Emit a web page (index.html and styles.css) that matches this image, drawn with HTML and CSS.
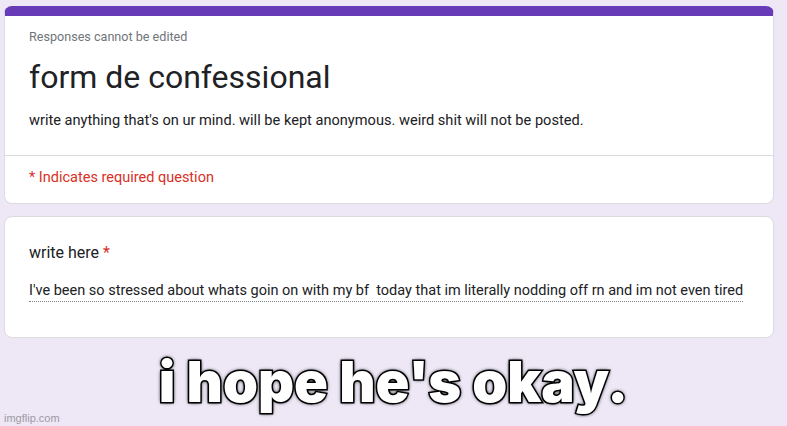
FILE: index.html
```html
<!DOCTYPE html>
<html lang="en">
<head>
    <meta charset="UTF-8">
    <meta name="viewport" content="width=device-width, initial-scale=1.0">
    <title>form de confessional</title>
    <link rel="stylesheet" href="styles.css">
</head>
<body>

    <!-- Header card -->
    <div class="card header-card">
        <div class="header-top">
            <p class="note">Responses cannot be edited</p>
            <h1>form de confessional</h1>
            <p class="desc">write anything that's on ur mind. will be kept anonymous. weird shit will not be posted.</p>
        </div>
        <div class="header-bottom">
            <p class="required">* Indicates required question</p>
        </div>
    </div>

    <!-- Question card -->
    <div class="card question-card">
        <p class="question">write here <span class="star">*</span></p>
        <p class="answer">I've been so stressed about whats goin on with my bf&nbsp; today that im literally nodding off rn and im not even tired</p>
    </div>

    <div class="caption">i hope he's okay.</div>
    <div class="watermark">imgflip.com</div>

</body>
</html>
```

FILE: styles.css
```css
body {
    font-family: Roboto, 'Noto Sans', Arial, sans-serif;
    background-color: #ede7f6;
    margin: 0;
    padding: 6px 13px 0 4px;
    height: 426px;
    box-sizing: border-box;
    overflow: hidden;
    position: relative;
    color: #202124;
}

p { margin: 0; }

.card {
    background: white;
    border: 1px solid #dadce0;
    border-radius: 8px;
}

.header-card {
    border-top: 10px solid #673ab7;
    height: 198px;
    box-sizing: border-box;
}

.header-top {
    padding: 13px 24px 0 24px;
    height: 140px;
    box-sizing: border-box;
    border-bottom: 1px solid #dadce0;
}

.note {
    font-size: 12.6px;
    color: #70757a;
    line-height: 16px;
}

h1 {
    font-size: 32px;
    font-weight: 400;
    margin: 16px 0 0;
    line-height: 32px;
}

.desc {
    font-size: 14.6px;
    line-height: 20px;
    margin-top: 17px;
}

.header-bottom { padding: 12px 24px 0; }

.required {
    font-size: 14.5px;
    line-height: 20px;
    color: #d93025;
}

.question-card {
    margin-top: 12px;
    height: 122px;
    box-sizing: border-box;
    padding: 25px 24px 0;
}

.question {
    font-size: 16px;
    line-height: 22px;
}

.star { color: #d93025; }

.answer {
    display: inline-block;
    font-size: 14.5px;
    line-height: 18px;
    margin-top: 18px;
    padding-bottom: 1px;
    border-bottom: 1px dotted #80868b;
}

.caption {
    text-align: center;
    font-family: 'Inter', 'Roboto', sans-serif;
    font-weight: 900;
    font-size: 56px;
    color: white;
    margin: 14px -13px 0 -4px;
    line-height: 60px;
    -webkit-text-stroke: 3px black;
    paint-order: stroke fill;
    text-shadow: 0 0 3px black, 0 0 4px black;
}

.watermark {
    position: absolute;
    left: 4px;
    bottom: 2px;
    font-family: 'Liberation Sans', Arial, sans-serif;
    font-size: 11px;
    color: #9e9aa5;
}
```
